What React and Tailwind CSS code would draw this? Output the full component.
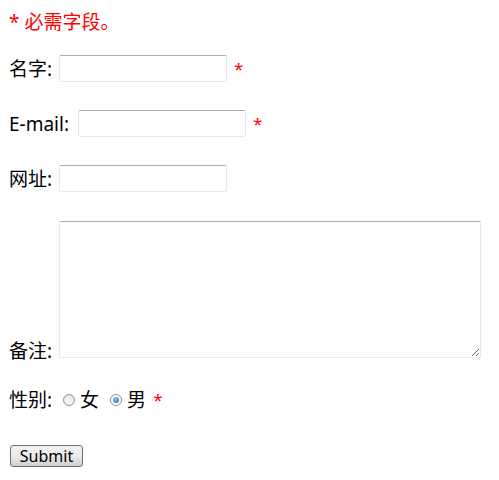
import React from "react";

function Req({ className = "" }) {
  return <span className={"text-[#ff0000] text-[17px] " + className}>*</span>;
}

const inputCls =
  "h-[27px] w-[168px] border border-[#e3e9ef] border-t-[#abadb3] bg-white rounded-[2px] outline-none";

export default function App() {
  return (
    <div
      className="bg-white text-black min-h-[480px] w-[499px] px-[9px] text-[19px] leading-[24px]"
      style={{ fontFamily: '"Noto Sans", "Noto Sans CJK SC", sans-serif' }}
    >
      <div className="pt-[10px] text-[#ff0000]">* 必需字段。</div>

      <div className="mt-[21px] flex items-center h-[27px]">
        <span>名字:</span>
        <input className={inputCls + " ml-[7px]"} />
        <Req className="ml-[7px]" />
      </div>

      <div className="mt-[28px] flex items-center h-[27px]">
        <span>E-mail:</span>
        <input className={inputCls + " ml-[9px]"} />
        <Req className="ml-[7px]" />
      </div>

      <div className="mt-[28px] flex items-center h-[27px]">
        <span>网址:</span>
        <input className={inputCls + " ml-[7px]"} />
      </div>

      <div className="mt-[29px] flex items-end">
        <span className="leading-[20px] mb-[-3px]">备注:</span>
        <textarea className="ml-[7px] h-[137px] w-[422px] border border-[#e3e9ef] border-t-[#abadb3] bg-white resize-y outline-none" />
      </div>

      <div className="mt-[30px] flex items-center h-[24px]">
        <span>性别:</span>
        <span className="ml-[11px] w-[12px] h-[12px] rounded-full border border-[#8f8f8f] bg-gradient-to-b from-[#e6e6e6] to-[#fafafa]" />
        <span className="ml-[5px]">女</span>
        <span className="ml-[11px] w-[12px] h-[12px] rounded-full border border-[#8f8f8f] bg-white flex items-center justify-center">
          <span className="w-[6px] h-[6px] rounded-full bg-[radial-gradient(circle_at_40%_35%,#7fd0f5,#1b5f94)]" />
        </span>
        <span className="ml-[5px]">男</span>
        <Req className="ml-[7px]" />
      </div>

      <div className="mt-[31px]">
        <button className="ml-[1px] h-[22px] w-[73px] rounded-[3px] border border-[#707070] bg-gradient-to-b from-[#f2f2f2] via-[#ebebeb] to-[#cfcfcf] text-[16px] leading-[20px] text-black">
          Submit
        </button>
      </div>
    </div>
  );
}
